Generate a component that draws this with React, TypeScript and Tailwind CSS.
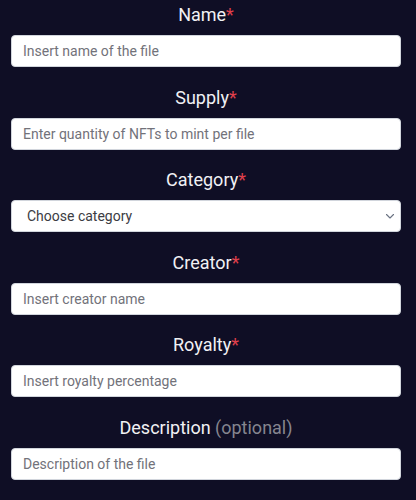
import React from 'react';

interface Field {
    label: string;
    placeholder: string;
    required?: boolean;
    select?: boolean;
}

const FIELDS: Field[] = [
    { label: 'Name', placeholder: 'Insert name of the file', required: true },
    { label: 'Supply', placeholder: 'Enter quantity of NFTs to mint per file', required: true },
    { label: 'Category', placeholder: 'Choose category', required: true, select: true },
    { label: 'Creator', placeholder: 'Insert creator name', required: true },
    { label: 'Royalty', placeholder: 'Insert royalty percentage', required: true },
    { label: 'Description', placeholder: 'Description of the file' },
];

const ChevronIcon: React.FC = () => (
    <svg className="w-[10px] h-[10px] text-gray-500" viewBox="0 0 10 10" fill="none" stroke="currentColor">
        <path d="M1.5 3.5L5 7l3.5-3.5" strokeWidth={1.1} strokeLinecap="round" strokeLinejoin="round" />
    </svg>
);

const App: React.FC = () => {
    return (
        <div className="min-h-[500px] w-full bg-[#0f0e25] pl-[11px] pr-[15px] pt-[1px] font-['Roboto',sans-serif]">
            <form className="flex flex-col gap-[16.5px]">
                {FIELDS.map((f) => (
                    <div key={f.label} className="flex flex-col">
                        <label className="text-center text-[18px] leading-[28px] text-[#f1f1f4] font-normal">
                            {f.label}
                            {f.required && <span className="text-[#e0404c]">*</span>}
                            {!f.required && <span className="text-[#85858f]"> (optional)</span>}
                        </label>
                        {f.select ? (
                            <div className="relative mt-[6px]">
                                <select className="appearance-none w-full h-[32px] rounded-[4px] border border-gray-300 bg-white pl-[15px] text-[14px] text-[#3c3c43] outline-none">
                                    <option>{f.placeholder}</option>
                                </select>
                                <div className="pointer-events-none absolute right-[6px] top-1/2 -translate-y-1/2">
                                    <ChevronIcon />
                                </div>
                            </div>
                        ) : (
                            <input
                                type="text"
                                placeholder={f.placeholder}
                                className="mt-[6px] w-full h-[32px] rounded-[4px] border border-gray-300 bg-white px-[11px] text-[14px] text-gray-800 placeholder:text-[#72727a] outline-none"
                            />
                        )}
                    </div>
                ))}
            </form>
        </div>
    );
};

export default App;
